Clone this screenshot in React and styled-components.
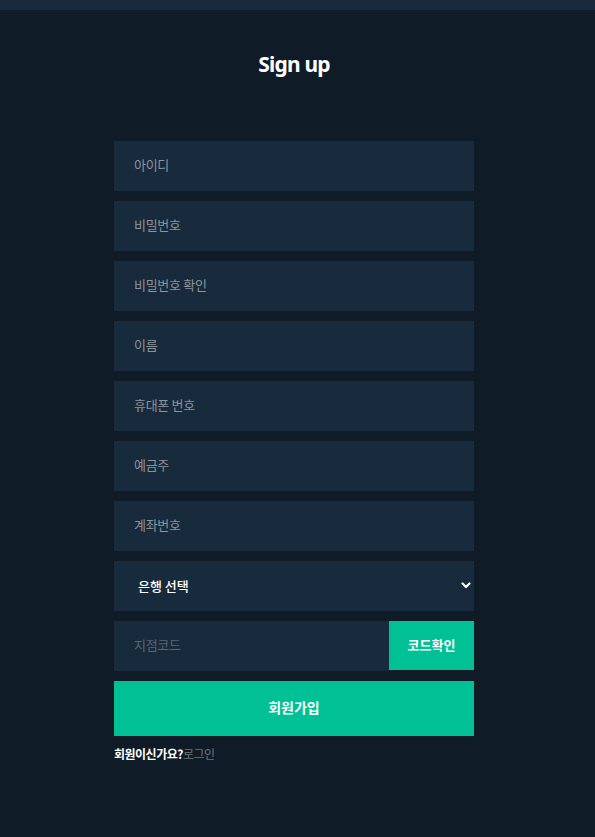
import React from 'react'
import styled, { createGlobalStyle } from 'styled-components'

const GlobalStyle = createGlobalStyle`
  html, body {
    margin: 0;
    padding: 0;
    background: #0f1b26;
    font-family: "Noto Sans CJK KR", "Noto Sans", sans-serif;
  }
`

const fields = ['아이디', '비밀번호', '비밀번호 확인', '이름', '휴대폰 번호', '예금주', '계좌번호']

export default function App() {
  return (
    <Page>
      <GlobalStyle />
      <TopBar />
      <Main>
        <Title>Sign up</Title>
        <Form>
          {fields.map((f) => (
            <Field key={f}>{f}</Field>
          ))}
          <Select>
            <span>은행 선택</span>
            <svg width="12" height="12" viewBox="0 0 12 12">
              <path d="M2.5 4.5 L6 8 L9.5 4.5" fill="none" stroke="#fff" strokeWidth="2.2" strokeLinecap="round" strokeLinejoin="round" />
            </svg>
          </Select>
          <CodeRow>
            <Field grow dim>지점코드</Field>
            <CodeButton>코드확인</CodeButton>
          </CodeRow>
          <Submit>회원가입</Submit>
          <Footer>
            <strong>회원이신가요?</strong>
            <span>로그인</span>
          </Footer>
        </Form>
      </Main>
    </Page>
  )
}

// STYLED COMPONENTS /////////////////////

const Page = styled.div`
  min-height: 837px;
  background: #0f1b26;
`

const TopBar = styled.div`
  height: 10px;
  background: #182b3c;
`

const Main = styled.div`
  padding-right: 7px;
`

const Title = styled.h1`
  margin: 0;
  padding-top: 40px;
  height: 91px;
  box-sizing: border-box;
  text-align: center;
  color: #fff;
  font-family: "Noto Sans", sans-serif;
  font-size: 21px;
  font-weight: 700;
  letter-spacing: -0.8px;
  line-height: 28px;
`

const Form = styled.div`
  width: 360px;
  margin: 40px auto 0;
  display: flex;
  flex-direction: column;
  gap: 10px;
`

const Field = styled.div`
  flex: ${(p) => (p.grow ? '1' : '0 0 50px')};
  height: 50px;
  background: #182b3c;
  display: flex;
  align-items: center;
  padding: 0 0 3px 20px;
  box-sizing: border-box;
  color: ${(p) => (p.dim ? '#5d6670' : '#8d949b')};
  font-size: 13px;
  letter-spacing: -0.3px;
`

const Select = styled.div`
  height: 50px;
  background: #182b3c;
  display: flex;
  align-items: center;
  justify-content: space-between;
  padding: 0 2px 2px 24px;
  box-sizing: border-box;
  color: #fff;
  font-size: 13px;
  font-weight: 500;
`

const CodeRow = styled.div`
  display: flex;
  height: 50px;
`

const CodeButton = styled.div`
  width: 85px;
  height: 49px;
  padding-bottom: 3px;
  box-sizing: border-box;
  background: #00c196;
  color: #fff;
  font-size: 13px;
  font-weight: 700;
  display: flex;
  align-items: center;
  justify-content: center;
`

const Submit = styled.div`
  height: 55px;
  padding-bottom: 3px;
  box-sizing: border-box;
  background: #00c196;
  color: #fff;
  font-size: 14px;
  font-weight: 700;
  display: flex;
  align-items: center;
  justify-content: center;
`

const Footer = styled.div`
  margin-top: -1px;
  font-size: 12px;
  letter-spacing: -0.5px;
  strong {
    color: #fff;
    font-weight: 700;
  }
  span {
    color: #6e757c;
  }
`
